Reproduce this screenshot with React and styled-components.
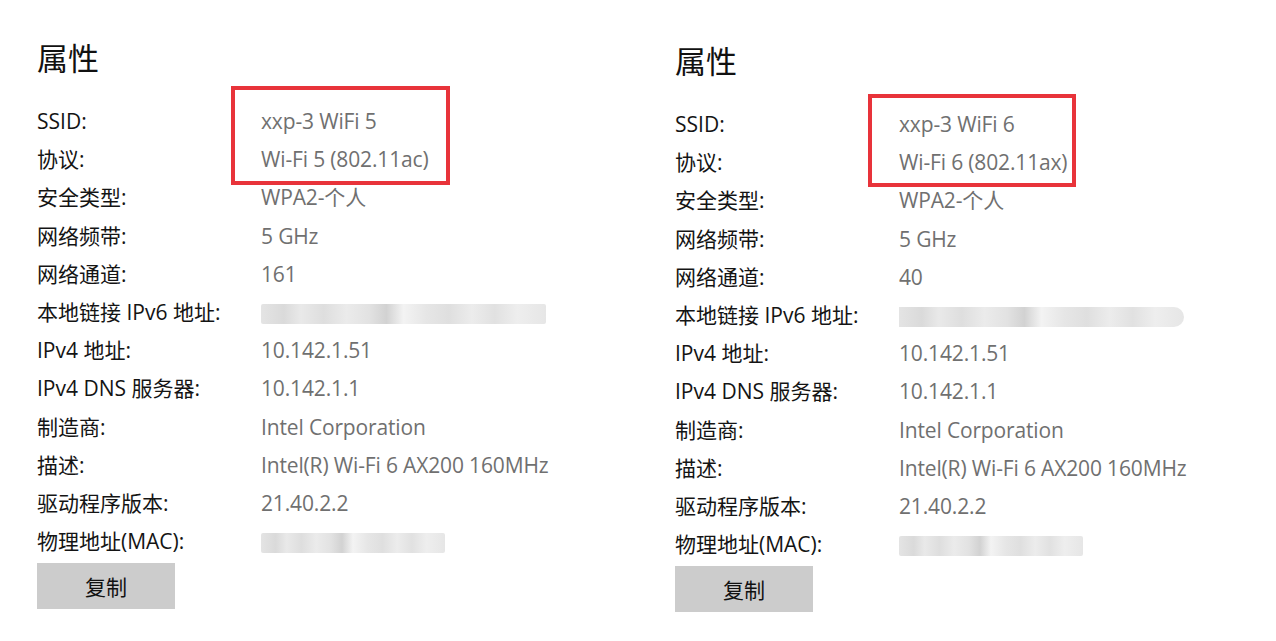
import React from 'react'
import styled, { createGlobalStyle } from 'styled-components'

const GlobalStyle = createGlobalStyle`
  html, body {
    margin: 0;
    padding: 0;
    background: #ffffff;
  }
  body {
    font-family: 'Open Sans', 'Noto Sans CJK SC', sans-serif;
  }
`

const Page = styled.div`
  display: grid;
  grid-template-columns: 638px 638px;
  width: 1276px;
  height: 641px;
  overflow: hidden;
`

const Panel = styled.section`
  position: relative;
  padding: ${({ shift }) => 37 + shift}px 0 0 ${({ indent }) => indent}px;
`

const Title = styled.h1`
  margin: 0 0 25px;
  height: 40px;
  font-family: 'Noto Sans CJK SC', sans-serif;
  font-size: 31px;
  font-weight: 400;
  line-height: 40px;
  color: #111;
`

const Row = styled.div`
  display: grid;
  grid-template-columns: 224px 1fr;
  align-items: center;
  height: 38.2px;
  font-size: 21px;
  line-height: 38px;
  white-space: nowrap;
`

const Label = styled.span`
  color: #141414;
  font-family: 'Open Sans', 'Noto Sans CJK SC', sans-serif;
`

const Value = styled.span`
  color: #707070;
  font-family: 'Open Sans', 'Noto Sans CJK SC', sans-serif;
  letter-spacing: -0.15px;
`

const Blur = styled.span`
  display: block;
  width: ${({ w }) => w}px;
  height: 20px;
  margin-top: 3px;
  border-radius: ${({ round }) => (round ? '0 10px 10px 0' : '2px')};
  background: linear-gradient(
    90deg,
    #e4e4e4 0%, #dadada 8%, #e9e9e9 14%, #dedede 22%, #ebebeb 30%,
    #e2e2e2 38%, #d2d2d2 44%, #f3f3f3 50%, #e6e6e6 58%, #dfdfdf 66%,
    #ececec 74%, #e1e1e1 82%, #eeeeee 90%, #e6e6e6 100%
  );
`

const CopyButton = styled.button`
  display: block;
  width: 138px;
  height: 46px;
  margin-top: 3px;
  border: none;
  background: #cccccc;
  font-family: 'Noto Sans CJK SC', sans-serif;
  font-size: 21px;
  color: #111;
  padding: 0;
`

const Highlight = styled.div`
  position: absolute;
  left: ${({ x }) => x}px;
  top: ${({ y }) => y}px;
  width: ${({ w }) => w}px;
  height: ${({ h }) => h}px;
  border: 4px solid #e8333a;
  box-sizing: border-box;
  pointer-events: none;
`

const panels = [
  {
    shift: 0,
    indent: 37,
    box: { x: 231, y: 86, w: 219, h: 99 },
    ssid: 'xxp-3 WiFi 5',
    proto: 'Wi-Fi 5 (802.11ac)',
    channel: '161',
    ipv6: 285,
    mac: 184,
    round: false
  },
  {
    shift: 3,
    indent: 37,
    box: { x: 230, y: 94, w: 208, h: 93 },
    ssid: 'xxp-3 WiFi 6',
    proto: 'Wi-Fi 6 (802.11ax)',
    channel: '40',
    ipv6: 285,
    mac: 184,
    round: true
  }
]

const Properties = ({ data }) => {
  const rows = [
    ['SSID:', data.ssid],
    ['协议:', data.proto],
    ['安全类型:', 'WPA2-个人'],
    ['网络频带:', '5 GHz'],
    ['网络通道:', data.channel],
    ['本地链接 IPv6 地址:', <Blur key='ipv6' w={data.ipv6} round={data.round} />],
    ['IPv4 地址:', '10.142.1.51'],
    ['IPv4 DNS 服务器:', '10.142.1.1'],
    ['制造商:', 'Intel Corporation'],
    ['描述:', 'Intel(R) Wi-Fi 6 AX200 160MHz'],
    ['驱动程序版本:', '21.40.2.2'],
    ['物理地址(MAC):', <Blur key='mac' w={data.mac} />]
  ]

  return (
    <Panel shift={data.shift} indent={data.indent}>
      <Title>属性</Title>
      {rows.map(([label, value]) => (
        <Row key={label}>
          <Label>{label}</Label>
          <Value>{value}</Value>
        </Row>
      ))}
      <CopyButton>复制</CopyButton>
      <Highlight {...data.box} />
    </Panel>
  )
}

const App = () => (
  <>
    <GlobalStyle />
    <Page>
      {panels.map(p => (
        <Properties key={p.ssid} data={p} />
      ))}
    </Page>
  </>
)

export default App
